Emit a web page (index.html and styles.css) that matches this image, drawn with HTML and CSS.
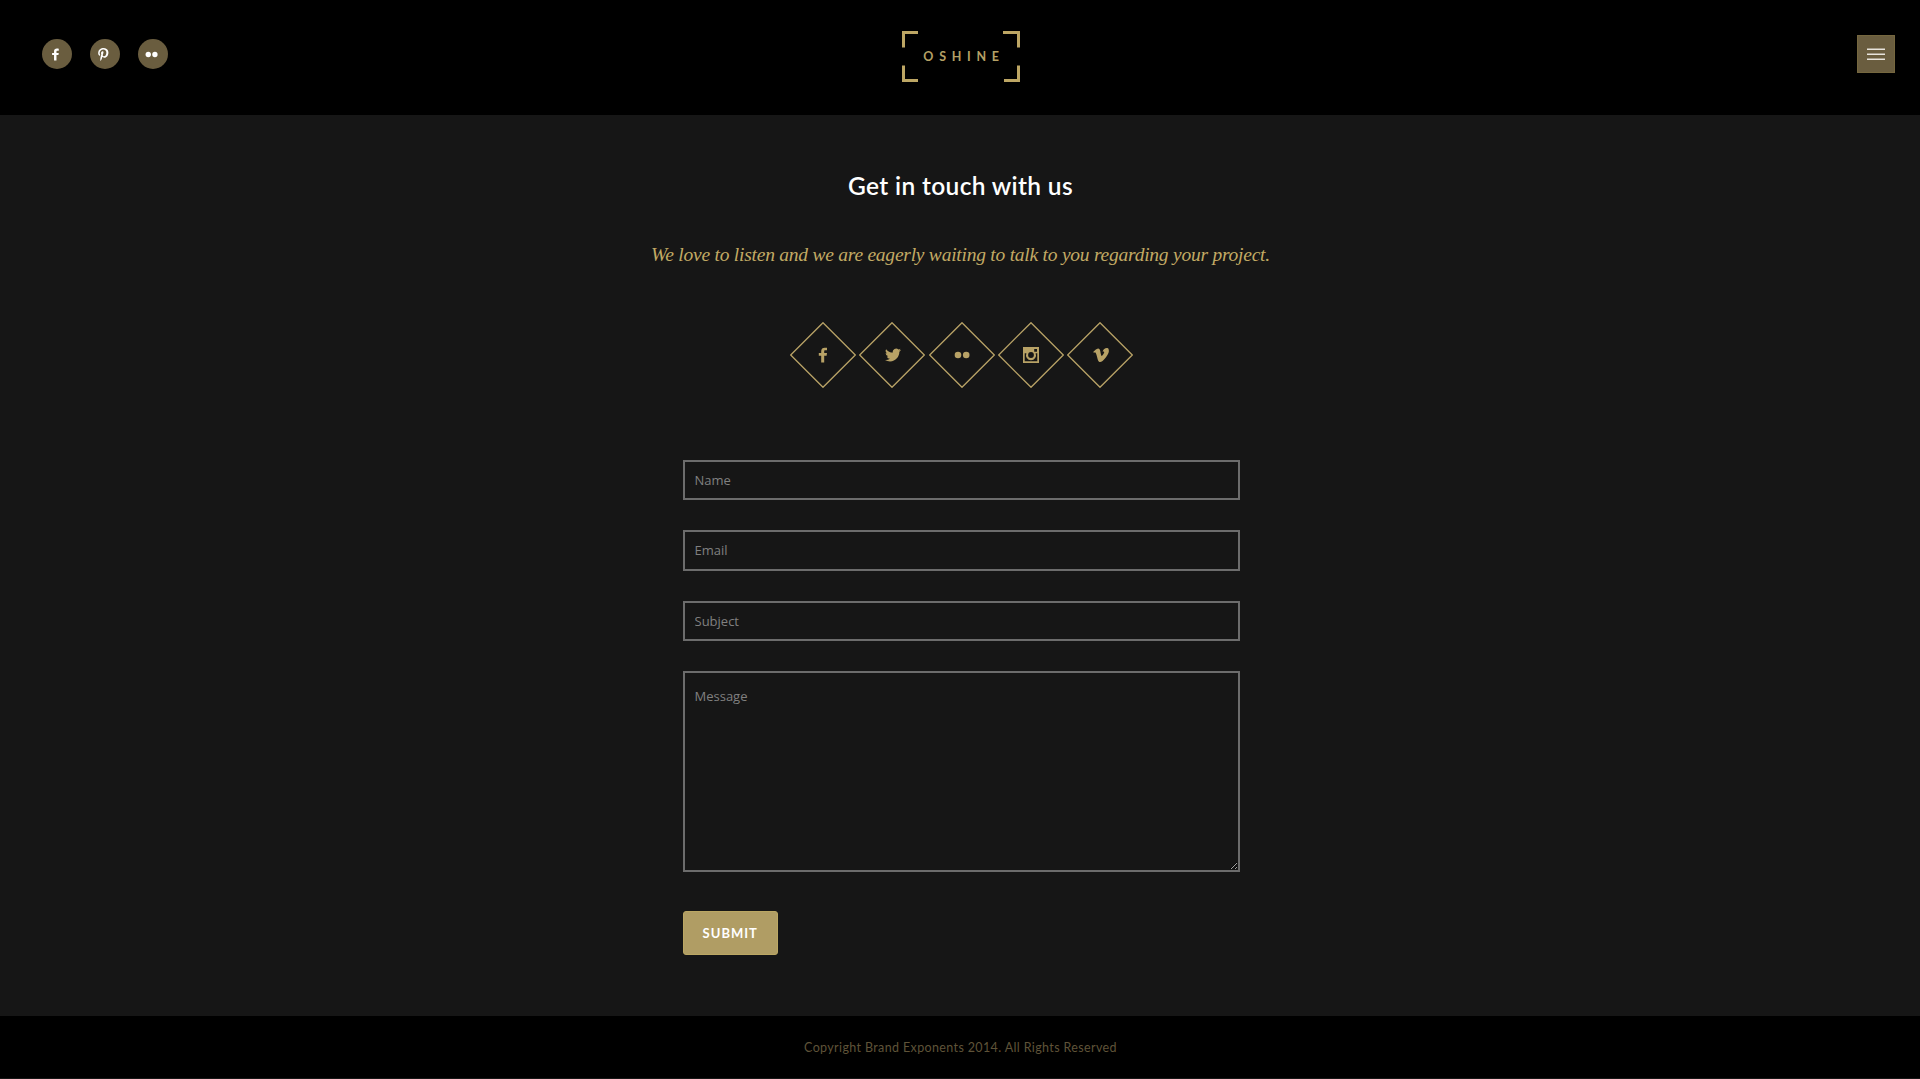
FILE: index.html
```
<!DOCTYPE html>
<html lang="en">
<head>
<meta charset="utf-8">
<title>Oshine – Contact</title>
<link rel="stylesheet" href="styles.css">
</head>
<body>
<svg class="sprite" aria-hidden="true">
  <symbol id="facebook" viewBox="0 0 16 16"><path d="M12 .8V3.300h-1.700c-.9 0-1.100.4-1.100 1.200v1.600h2.800l-.4 2.600H9.200V15.500H6.200V8.700H3.800V6.100h2.400V4.100C6.200 1.900 7.600.7 9.700.7c1 0 1.900 0 2.300.1z"/></symbol>
  <symbol id="pinterest" viewBox="0 0 16 16"><path d="M6.300 10.600C5.900 12.800 5.300 14.800 3.700 16c-.5-3.500.7-6.200 1.300-9-1-1.600.1-4.900 2.200-4.100 2.500 1-2.200 6.100 1 6.800 3.400.7 4.800-5.900 2.700-8C7.800-1.400 2.100 1.600 2.800 6c.2 1.100 1.300 1.400.4 2.900C1.200 8.400.6 6.800.7 4.700.8 1.200 3.800-1.200 6.800-1.600c3.800-.4 7.300 1.400 7.800 5 .6 4-1.700 8.400-5.800 8.100-1.100-.1-1.600-.7-2.500-.9z" transform="translate(.8 1.500) scale(.9)"/></symbol>
  <symbol id="flickr" viewBox="0 0 16 16"><circle cx="4" cy="8" r="3.300"/><circle cx="12.200" cy="8" r="3.300"/></symbol>
  <symbol id="twitter" viewBox="0 0 24 24"><path d="M24 4.600a10 10 0 0 1-2.800.8 5 5 0 0 0 2.100-2.700 10 10 0 0 1-3.100 1.200 4.900 4.900 0 0 0-8.400 4.500A14 14 0 0 1 1.700 3.200a4.900 4.900 0 0 0 1.500 6.500 4.900 4.900 0 0 1-2.200-.6v.1a4.900 4.900 0 0 0 3.900 4.800 5 5 0 0 1-2.200.1 4.900 4.900 0 0 0 4.600 3.400A9.900 9.900 0 0 1 0 19.500 14 14 0 0 0 7.500 21.700c9.100 0 14.300-7.700 14-14.600A10 10 0 0 0 24 4.600z"/></symbol>
  <symbol id="instagram" viewBox="0 0 16 16"><path fill-rule="evenodd" d="M0 0h16v16H0zM1.700 6.200v8.100h12.600V6.200h-1.700a5 5 0 1 1-9.200 0zM11.200 2v2.800H14V2zM8 5.100a2.900 2.900 0 1 0 0 5.800 2.900 2.900 0 0 0 0-5.800z"/></symbol>
  <symbol id="vimeo" viewBox="0 0 24 24"><path d="M23.800 6.500c-.1 2.300-1.700 5.500-4.900 9.600-3.300 4.200-6 6.400-8.300 6.400-1.400 0-2.600-1.300-3.500-3.900L5.200 11.600C4.500 9 3.800 7.700 3 7.700c-.2 0-.7.400-1.600 1L.3 7.400l3.500-3.100C5.400 2.900 6.600 2.200 7.400 2.100c1.900-.2 3 1.100 3.500 3.800.8 5 1.600 7.600 2.200 7.600.9 0 3.600-4.100 3.700-5.600.1-1.400-1-1.500-2.400-.9 1.200-3.800 3.400-5.600 6.700-5.500 2.400.1 2.800 2.600 2.700 5z"/></symbol>
</svg>

<header class="header">
  <nav class="social">
    <a class="social-link"><svg class="icon"><use href="#facebook"/></svg></a>
    <a class="social-link"><svg class="icon"><use href="#pinterest"/></svg></a>
    <a class="social-link"><svg class="icon"><use href="#flickr"/></svg></a>
  </nav>
  <a class="logo">
    <svg class="logo-frame" viewBox="0 0 118 51"><path d="M1.500 16.500V1.500h14.500M101 1.500h15.500v15M116.500 34.500v15H102M16 49.500H1.500v-15"/></svg>
    <span class="logo-text">OSHINE</span>
  </a>
  <button class="menu" aria-label="Menu"><span class="bar"></span><span class="bar"></span><span class="bar"></span></button>
</header>

<main class="content">
  <h1 class="title">Get in touch with us</h1>
  <p class="lead">We love to listen and we are eagerly waiting to talk to you regarding your project.</p>
  <div class="diamonds">
    <a class="diamond"><svg class="outline" viewBox="0 0 66 66"><path d="M33 .7 65.300 33 33 65.300.7 33z"/></svg><svg class="icon"><use href="#facebook"/></svg></a>
    <a class="diamond"><svg class="outline" viewBox="0 0 66 66"><path d="M33 .7 65.300 33 33 65.300.7 33z"/></svg><svg class="icon"><use href="#twitter"/></svg></a>
    <a class="diamond"><svg class="outline" viewBox="0 0 66 66"><path d="M33 .7 65.300 33 33 65.300.7 33z"/></svg><svg class="icon"><use href="#flickr"/></svg></a>
    <a class="diamond"><svg class="outline" viewBox="0 0 66 66"><path d="M33 .7 65.300 33 33 65.300.7 33z"/></svg><svg class="icon"><use href="#instagram"/></svg></a>
    <a class="diamond"><svg class="outline" viewBox="0 0 66 66"><path d="M33 .7 65.300 33 33 65.300.7 33z"/></svg><svg class="icon"><use href="#vimeo"/></svg></a>
  </div>
  <form class="form">
    <input class="field" type="text" placeholder="Name">
    <input class="field" type="text" placeholder="Email">
    <input class="field" type="text" placeholder="Subject">
    <textarea class="field message" placeholder="Message"></textarea>
    <button class="submit" type="button">SUBMIT</button>
  </form>
</main>

<footer class="footer"><span class="copyright">Copyright Brand Exponents 2014. All Rights Reserved</span></footer>
</body>
</html>
```
FILE: styles.css
```
* { box-sizing: border-box; }
body {
  margin: 0;
  height: 1079px;
  display: flex;
  flex-direction: column;
  overflow: hidden;
  background: #161616;
  color: #fff;
  font-family: Lato, sans-serif;
}
.sprite { display: none; }
.icon { display: block; fill: currentColor; overflow: visible; }

.header {
  height: 115px;
  flex: none;
  display: grid;
  grid-template-columns: 1fr 118px 1fr;
  align-items: start;
  padding: 31px 25px 0 42px;
  background: #000;
}
.social { display: flex; gap: 18px; padding-top: 8px; }
.social-link {
  width: 30px;
  height: 30px;
  display: grid;
  place-items: center;
  padding-right: 3px;
  border-radius: 50%;
  background: #6a5d3f;
}
.social-link .icon { width: 13px; height: 13px; }
.logo {
  width: 118px;
  height: 51px;
  display: grid;
  place-items: center;
  margin-left: -7.500px;
}
.logo-frame {
  grid-area: 1 / 1;
  width: 118px;
  height: 51px;
  fill: none;
  stroke: #bda664;
  stroke-width: 3;
}
.logo-text {
  grid-area: 1 / 1;
  color: #b5a165;
  font-size: 12.500px;
  font-weight: 700;
  line-height: 15px;
  letter-spacing: 5.700px;
  padding-left: 6px;
}
.menu {
  justify-self: end;
  width: 38px;
  height: 38px;
  margin-top: 4px;
  padding: 0;
  display: flex;
  flex-direction: column;
  align-items: center;
  justify-content: center;
  gap: 3px;
  border: 1px solid #75673f;
  background: #6a5d3f;
}
.bar {
  width: 18px;
  height: 2px;
  background: linear-gradient(#a89f8d 50%, #e8e4dc 50%);
}

.content {
  height: 901px;
  flex: none;
  display: flex;
  flex-direction: column;
  align-items: center;
}
.title {
  margin: 56px 0 0 1px;
  font-size: 24.500px;
  font-weight: 600;
  line-height: 30px;
  letter-spacing: .35px;
  white-space: nowrap;
}
.lead {
  margin: 39px 0 0 1px;
  color: #c2aa64;
  font: italic 19.500px/30px "Liberation Serif", serif;
  letter-spacing: -.24px;
  white-space: nowrap;
}
.diamonds { display: flex; gap: 3.300px; margin: 52px 0 0 3px; }
.diamond {
  width: 66px;
  height: 66px;
  display: grid;
  place-items: center;
  color: #b8a266;
}
.diamond > * { grid-area: 1 / 1; }
.diamond .icon { width: 16px; height: 16px; margin-left: 1px; }
.outline { width: 66px; height: 66px; fill: none; stroke: #b8a266; stroke-width: 1.300; }

.form {
  width: 557px;
  display: flex;
  flex-direction: column;
  align-items: flex-start;
  gap: 30px;
  margin: 72px 0 0 2px;
}
.field {
  display: block;
  width: 557px;
  height: 40.300px;
  flex: none;
  margin: 0;
  padding: 0 10px;
  border: 2px solid #6c6c6c;
  border-radius: 0;
  outline: 0;
  background: transparent;
  color: #fff;
  font: 13px/20px "Open Sans", sans-serif;
}
.field::placeholder { color: #808080; opacity: 1; }
.message { height: 201px; padding-top: 13px; resize: vertical; }
.submit {
  width: 95.500px;
  height: 44.500px;
  margin-top: 9px;
  padding: 0;
  border: 1px solid #bba763;
  border-radius: 3px;
  background: #b09d64;
  color: #fff;
  font: 700 13px/20px Lato, sans-serif;
  letter-spacing: 1px;
}

.footer {
  height: 63px;
  flex: none;
  display: flex;
  justify-content: center;
  padding-top: 22px;
  padding-left: 1px;
  border-bottom: 1px solid #161616;
  background: #000;
  color: #5f5338;
}
.copyright { font-size: 12.500px; line-height: 20px; letter-spacing: .37px; white-space: nowrap; }
```
